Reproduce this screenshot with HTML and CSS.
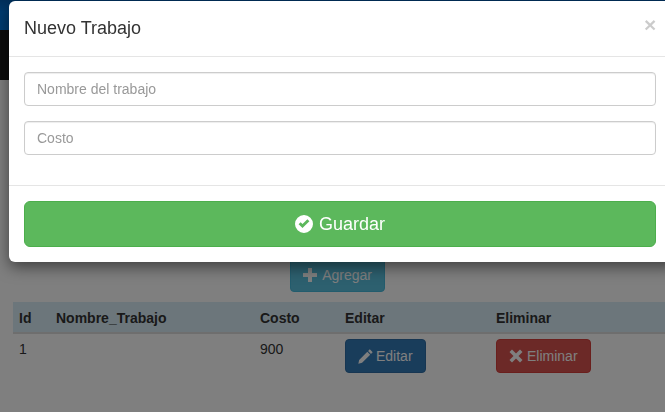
FILE: index.html
```html
<!DOCTYPE html>
<html lang="es">
<head>
    <meta charset="UTF-8">
    <meta name="viewport" content="width=device-width, initial-scale=1.0">
    <title>Trabajos</title>
    <link rel="stylesheet" href="styles.css">
</head>
<body>
    <div class="top-bar"></div>
    <div class="nav-bar"></div>

    <div class="content">
        <div class="add-row">
            <button class="btn btn-info">
                <svg class="icon" viewBox="0 0 14 14"><path d="M5 0h4v5h5v4H9v5H5V9H0V5h5z"/></svg>
                Agregar
            </button>
        </div>
        <table class="jobs">
            <thead>
                <tr>
                    <th class="col-id">Id</th>
                    <th class="col-name">Nombre_Trabajo</th>
                    <th class="col-cost">Costo</th>
                    <th class="col-edit">Editar</th>
                    <th>Eliminar</th>
                </tr>
            </thead>
            <tbody>
                <tr>
                    <td>1</td>
                    <td></td>
                    <td>900</td>
                    <td>
                        <button class="btn btn-primary">
                            <svg class="icon" viewBox="0 0 14 14"><path d="M11 0.3l2.7 2.7-1.6 1.6-2.7-2.7zM8.7 2.6l2.7 2.7-7.6 7.6L0.3 13.7l0.8-3.5z"/></svg>
                            Editar
                        </button>
                    </td>
                    <td>
                        <button class="btn btn-danger">
                            <svg class="icon" viewBox="0 0 14 14"><path d="M3 0.5L7 4.5L11 0.5L13.5 3L9.5 7L13.5 11L11 13.5L7 9.5L3 13.5L0.5 11L4.5 7L0.5 3z"/></svg>
                            Eliminar
                        </button>
                    </td>
                </tr>
            </tbody>
        </table>
    </div>

    <div class="backdrop"></div>

    <div class="modal">
        <div class="modal-header">
            <h4 class="modal-title">Nuevo Trabajo</h4>
            <span class="close">&times;</span>
        </div>
        <div class="modal-body">
            <input class="field" type="text" placeholder="Nombre del trabajo">
            <input class="field" type="text" placeholder="Costo">
        </div>
        <div class="modal-footer">
            <button class="btn-save">
                <svg class="icon-save" viewBox="0 0 18 18"><path fill-rule="evenodd" d="M9 0a9 9 0 1 1 0 18A9 9 0 0 1 9 0zM3.6 9.2l3.9 3.9 6.9-6.9-2-2-4.9 4.9-1.9-1.9z"/></svg>
                Guardar
            </button>
        </div>
    </div>
</body>
</html>
```

FILE: styles.css
```css
* {
    box-sizing: border-box;
}
html, body {
    height: 100%;
}
body {
    margin: 0;
    font-family: "Liberation Sans", Arial, sans-serif;
    font-size: 14px;
    line-height: 20px;
    color: #333;
    background: #fff;
    overflow: hidden;
}
.top-bar {
    height: 30px;
    background: linear-gradient(#0060b8, #0078e0 40%);
}
.nav-bar {
    height: 50px;
    background: #1a1a1a;
}
.content {
    padding: 178px 0 0 13px;
}
.add-row {
    width: 372px;
    text-align: right;
    margin-bottom: 10px;
}
.btn {
    display: inline-flex;
    align-items: center;
    gap: 4px;
    height: 34px;
    padding: 0 12px;
    border: 1px solid transparent;
    border-radius: 4px;
    color: #fff;
    font: inherit;
}
.btn-info {
    gap: 5px;
    background: #5bc0de;
    border-color: #46b8da;
}
.btn-primary {
    gap: 3px;
    background: #337ab7;
    border-color: #2e6da4;
}
.btn-primary .icon {
    width: 15px;
    height: 15px;
}
.btn-danger {
    background: #d9534f;
    border-color: #d43f3a;
}
.icon {
    width: 14px;
    height: 14px;
    fill: currentColor;
}
.jobs {
    width: 652px;
    border-collapse: collapse;
    table-layout: fixed;
}
.jobs th {
    height: 31px;
    padding: 1px 6px 0;
    text-align: left;
    background: #d9edf7;
    border-bottom: 2px solid #ddd;
}
.jobs td {
    padding: 5px 6px;
    vertical-align: top;
}
.jobs .btn {
    display: flex;
}
.col-id {
    width: 37px;
}
.col-name {
    width: 204px;
}
.col-cost {
    width: 85px;
}
.col-edit {
    width: 151px;
}
.backdrop {
    position: fixed;
    inset: 0;
    background: rgba(0,0,0,0.5);
}
.modal {
    position: absolute;
    top: 1px;
    left: 9px;
    width: 670px;
    height: 261px;
    background: #fff;
    border-radius: 6px;
    box-shadow: 0 5px 15px rgba(0,0,0,0.5);
}
.modal-header {
    height: 56px;
    padding: 0 15px;
    display: flex;
    align-items: center;
    border-bottom: 1px solid #e5e5e5;
}
.modal-title {
    margin: 0;
    font-size: 18px;
    font-weight: normal;
    line-height: 25px;
}
.close {
    position: absolute;
    top: 12px;
    left: 635px;
    font-size: 21px;
    font-weight: bold;
    line-height: 24px;
    color: #000;
    opacity: 0.2;
}
.modal-body {
    padding: 15px 0 0 15px;
    height: 129px;
    border-bottom: 1px solid #e5e5e5;
}
.field {
    display: block;
    width: 632px;
    height: 34px;
    margin-bottom: 15px;
    padding: 6px 12px;
    border: 1px solid #ccc;
    border-radius: 4px;
    font: inherit;
    color: #555;
    box-shadow: inset 0 1px 1px rgba(0,0,0,0.075);
}
.field::placeholder {
    color: #999;
}
.modal-footer {
    padding: 15px 0 0 15px;
}
.btn-save {
    display: flex;
    align-items: center;
    justify-content: center;
    gap: 6px;
    width: 632px;
    height: 46px;
    border: 1px solid #4cae4c;
    border-radius: 6px;
    background: #5cb85c;
    color: #fff;
    font: inherit;
    font-size: 18px;
}
.icon-save {
    width: 18px;
    height: 18px;
    fill: currentColor;
}
```
